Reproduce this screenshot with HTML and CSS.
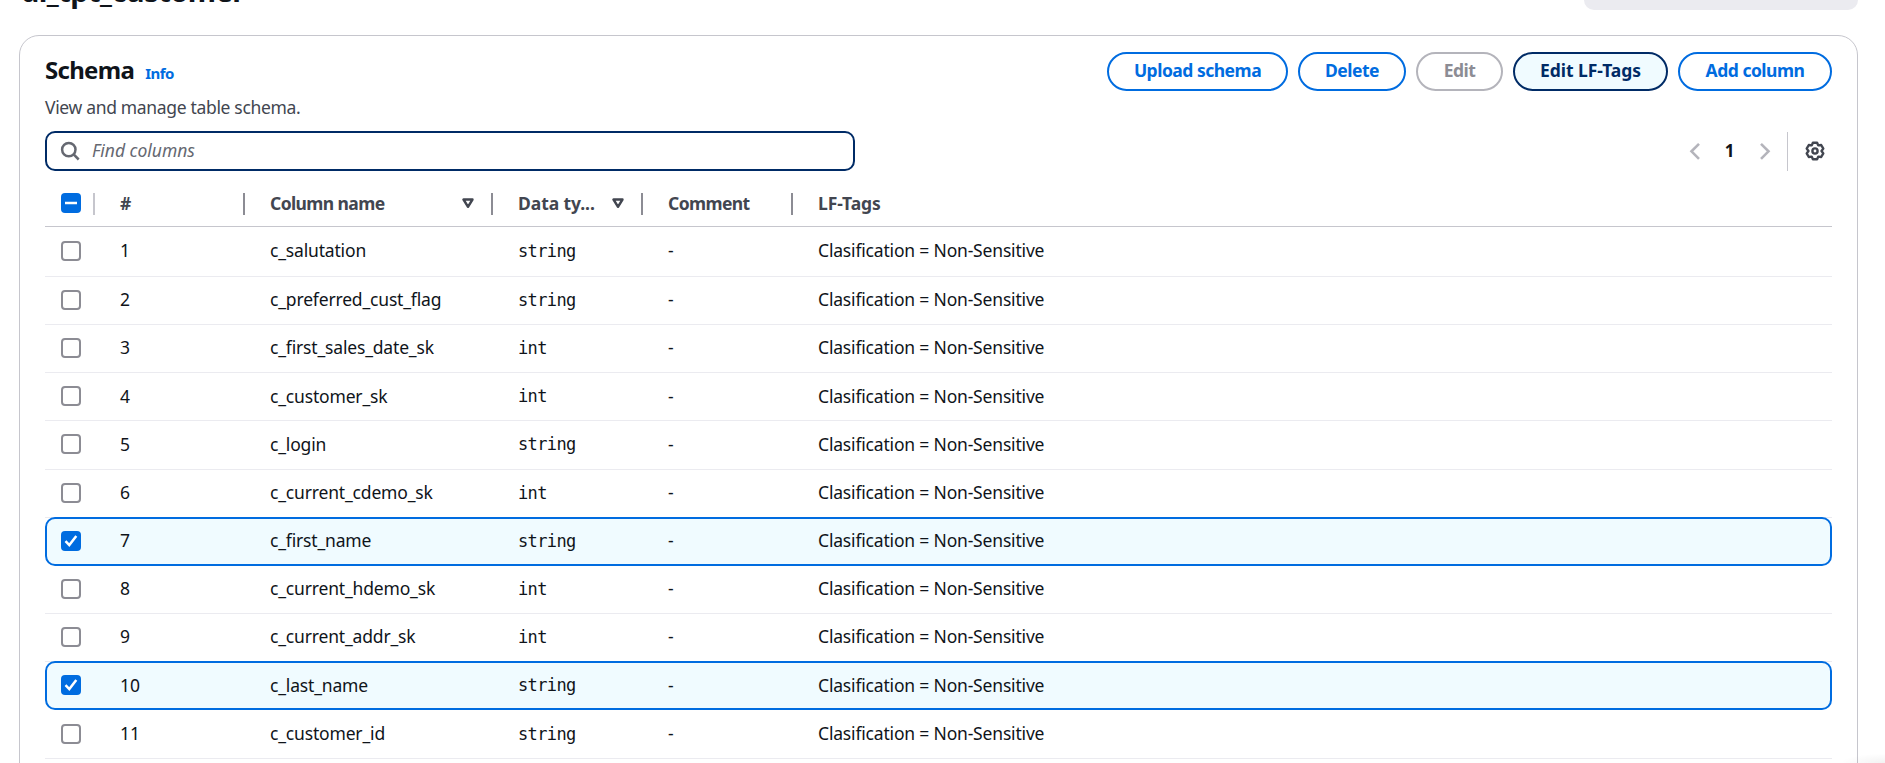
FILE: index.html
```html
<!DOCTYPE html>
<html lang="en">
<head>
<meta charset="utf-8">
<title>Schema</title>
<link rel="stylesheet" href="styles.css">
</head>
<body>
<div class="page">
  <header class="top">
    <h1 class="title">dl_tpt_customer</h1>
    <div class="version"></div>
  </header>
  <section class="panel">
    <div class="head">
      <div class="heading"><h2>Schema</h2><a class="info">Info</a></div>
      <div class="actions">
        <button class="btn upload">Upload schema</button>
        <button class="btn delete">Delete</button>
        <button class="btn edit">Edit</button>
        <button class="btn lf">Edit LF-Tags</button>
        <button class="btn add">Add column</button>
      </div>
    </div>
    <p class="desc">View and manage table schema.</p>
    <div class="tools">
      <div class="search">
        <svg width="20" height="20" viewBox="0 0 20 20"><circle cx="8.8" cy="8.6" r="6.7"/><path d="M13.400 13.200l5.300 5.300"/></svg>
        <span class="ph">Find columns</span>
      </div>
      <div class="pager">
        <svg class="chev" width="12" height="18" viewBox="0 0 12 18"><path d="M10 1.800L2.500 9.300l7.500 7.500"/></svg>
        <b class="num">1</b>
        <svg class="chev" width="12" height="18" viewBox="0 0 12 18"><path d="M2 1.800l7.500 7.500L2 16.800"/></svg>
        <i class="sep"></i>
        <svg class="gear" width="20" height="20" viewBox="0 0 20 20"><path d="M7.900 1.700h4.200L13.250 4.400 16.200 4 18.300 7.600 16.500 10 18.300 12.400 16.200 16 13.250 15.600 12.100 18.300H7.900L6.750 15.600 3.800 16 1.700 12.400 3.500 10 1.700 7.600 3.800 4 6.750 4.400z"/><circle cx="10" cy="10" r="2.600"/></svg>
      </div>
    </div>
    <div class="table" id="table">
      <div class="row thead">
        <div class="c0"><span class="box on"><svg width="20" height="20" viewBox="0 0 20 20"><path d="M4 10h12"/></svg></span></div>
        <div class="th first"><span>#</span></div>
        <div class="th"><span>Column name</span><svg class="sort" width="12" height="11" viewBox="0 0 12 11"><path d="M1.500 1.500h9L6 8.800z"/></svg></div>
        <div class="th"><span class="wide">Data ty...</span><svg class="sort" width="12" height="11" viewBox="0 0 12 11"><path d="M1.500 1.500h9L6 8.800z"/></svg></div>
        <div class="th"><span>Comment</span></div>
        <div class="th"><span class="wide">LF-Tags</span></div>
      </div>
    </div>
  </section>
  <div class="corner"></div>
</div>
<script src="rows.js"></script>
</body>
</html>
```
FILE: rows.js
```js
const rows = [
  ["c_salutation", "string"],
  ["c_preferred_cust_flag", "string"],
  ["c_first_sales_date_sk", "int"],
  ["c_customer_sk", "int"],
  ["c_login", "string"],
  ["c_current_cdemo_sk", "int"],
  ["c_first_name", "string", true],
  ["c_current_hdemo_sk", "int"],
  ["c_current_addr_sk", "int"],
  ["c_last_name", "string", true],
  ["c_customer_id", "string"]
];
const check = '<svg width="20" height="20" viewBox="0 0 20 20"><path d="M4.500 10.200l3.800 3.900 7-9"/></svg>';
document.getElementById("table").insertAdjacentHTML("beforeend", rows.map(([name, type, on], i) =>
  `<div class="row${on ? " selected" : ""}">
    <div class="c0"><span class="box${on ? " on" : ""}">${on ? check : ""}</span></div>
    <div class="td index">${i + 1}</div>
    <div class="td">${name}</div>
    <div class="td mono">${type}</div>
    <div class="td">-</div>
    <div class="td tags">Clasification = Non-Sensitive</div>
  </div>`).join(""));
```
FILE: styles.css
```css
* { box-sizing: border-box; }
html, body { margin: 0; height: 763px; overflow: hidden; background: #fff; }
body { font-family: "Noto Sans", "Open Sans", sans-serif; font-size: 17.5px; color: #0f141a; }
h1, h2, p { margin: 0; }
.page { position: relative; width: 1885px; height: 763px; padding: 0 27px 0 19px; overflow: hidden; }
.top { display: flex; justify-content: space-between; height: 35px; }
.title { font-size: 29px; line-height: 36px; margin: -27px 0 0 2px; letter-spacing: -0.55px; }
.version { width: 274px; height: 10px; border-radius: 0 0 10px 10px; background: #ebebf0; }
.panel { height: 760px; border: 1px solid #c6c6cd; border-radius: 20px; padding: 16px 25px 0; }
.head { display: flex; justify-content: space-between; height: 39px; }
.heading { display: flex; align-items: baseline; gap: 11px; }
h2 { font-size: 24px; line-height: 35px; letter-spacing: -0.7px; }
.info { color: #006ce0; font-size: 15px; font-weight: 700; letter-spacing: -0.5px; }
.actions { display: flex; gap: 10px; }
.btn { height: 39px; padding: 0 0 3px; border: 2px solid #006ce0; border-radius: 20px; background: #fff; color: #006ce0; font: 700 17.5px "Noto Sans", sans-serif; letter-spacing: -0.5px; white-space: nowrap; }
.upload { width: 181px; }
.delete { width: 108px; }
.edit { width: 87px; border-color: #b4b4bb; color: #8c8c94; }
.lf { width: 155px; border-color: #002b66; color: #002b66; background: #f0fbff; letter-spacing: -0.05px; }
.add { width: 154px; }
.desc { line-height: 25px; margin-top: 4px; color: #424650; letter-spacing: -0.33px; }
.tools { display: flex; justify-content: space-between; margin-top: 11px; height: 40px; }
.search { display: flex; align-items: center; gap: 12px; width: 810px; height: 40px; padding-left: 13px; border: 2px solid #002b66; border-radius: 10px; }
.search svg { fill: none; stroke: #656871; stroke-width: 2.5; }
.ph { font-style: italic; color: #656871; letter-spacing: -0.02px; margin-top: -2px; }
.pager { display: flex; align-items: center; padding-right: 7px; }
.chev { fill: none; stroke: #b4b4bb; stroke-width: 2.6; }
.num { width: 58px; text-align: center; font-size: 17px; padding: 0 1px 1px 0; }
.sep { width: 1px; height: 39px; margin: 0 17px 0 16px; background: #c6c6cd; }
.gear { fill: none; stroke: #424650; stroke-width: 2.4; stroke-linejoin: round; }
.row { display: grid; grid-template-columns: 75px 150px 248px 150px 150px 1fr; height: 48.2px; align-items: center; border-bottom: 1px solid #ebebf0; }
.thead { height: 56px; border-bottom-color: #c6c6cd; padding-top: 10px; }
.thead + .row { height: 49.8px; }
.c0 { display: flex; padding: 0 0 1px 16px; }
.box { width: 20px; height: 20px; border: 2px solid #8c8c94; border-radius: 4px; }
.box.on { border: 0; background: #006ce0; }
.box svg { display: block; fill: none; stroke: #fff; stroke-width: 2.5; }
.th { position: relative; display: flex; align-items: center; justify-content: space-between; height: 24px; padding-right: 44px; font-weight: 700; color: #424650; letter-spacing: -0.6px; }
.th span { padding-bottom: 2px; }
.th .wide { letter-spacing: -0.08px; }
.th::before { content: ""; position: absolute; left: -27px; top: 1px; width: 2px; height: 22px; background: #8c8c94; }
.th.first::before { background: #c6c6cd; }
.sort { fill: none; stroke: #424650; stroke-width: 2.4; stroke-linejoin: round; }
.td { letter-spacing: -0.17px; white-space: nowrap; padding-bottom: 2.5px; }
.index { letter-spacing: 0; }
.tags { letter-spacing: -0.18px; }
.mono { font: 17px "DejaVu Sans Mono", monospace; letter-spacing: -0.64px; padding-bottom: 1px; }
.selected { grid-template-columns: 73.5px 150px 248px 150px 150px 1fr; height: 49.2px; margin: -1px 0 0 -0.5px; border: 2px solid #006ce0; border-radius: 10px; background: #f0fbff; }
.selected .c0 { padding-left: 14.5px; }
.corner { position: absolute; right: 0; bottom: 0; width: 42px; height: 9px; background: radial-gradient(ellipse at 100% 100%, rgba(0,0,0,.05), rgba(0,0,0,0) 75%); }
```
